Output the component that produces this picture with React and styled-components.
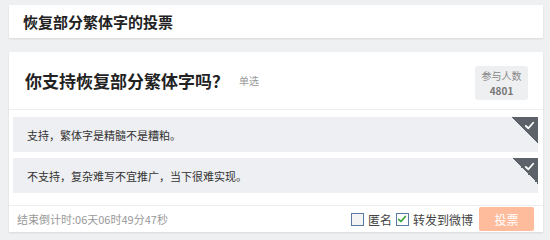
import React from "react";
import styled, { createGlobalStyle } from "styled-components";

const GlobalStyle = createGlobalStyle`
  body {
    margin: 0;
    background: #eef0f2;
    font-family: "Noto Sans CJK SC", "Liberation Sans", sans-serif;
  }
`;

const options = [
  { id: 1, text: "支持，繁体字是精髓不是糟粕。" },
  { id: 2, text: "不支持，复杂难写不宜推广，当下很难实现。" },
];

const Check = ({ color = "#fff", size = 12 }) => (
  <svg width={size} height={size} viewBox="0 0 12 12">
    <path d="M2 6.5 L4.8 9 L10 3" fill="none" stroke={color} strokeWidth="2" strokeLinecap="round" strokeLinejoin="round" />
  </svg>
);

const App = () => {
  return (
    <>
      <GlobalStyle />
      <Page>
        <TitleCard>恢复部分繁体字的投票</TitleCard>
        <VoteCard>
          <Head>
            <Question>
              你支持恢复部分繁体字吗？<Kind>单选</Kind>
            </Question>
            <Count>
              <CountLine>参与人数</CountLine>
              <CountLine bold>4801</CountLine>
            </Count>
          </Head>
          <List>
            {options.map((o) => (
              <Option key={o.id}>
                {o.text}
                <Corner>
                  <Check size={11} />
                </Corner>
              </Option>
            ))}
          </List>
          <Footer>
            <Timer>结束倒计时:06天06时49分47秒</Timer>
            <Actions>
              <Box />
              <Label>匿名</Label>
              <Box checked>
                <Check color="#3aa33a" size={10} />
              </Box>
              <Label>转发到微博</Label>
              <VoteButton>投票</VoteButton>
            </Actions>
          </Footer>
        </VoteCard>
      </Page>
    </>
  );
};

export default App;

const Page = styled.div`
  width: 550px;
  height: 240px;
  padding: 5px 7px 0 9px;
  box-sizing: border-box;
  display: flex;
  flex-direction: column;
  gap: 14px;
`;

const Card = styled.div`
  background: #fff;
  box-shadow: 0 1px 2px rgba(0, 0, 0, 0.1);
`;

const TitleCard = styled(Card)`
  height: 33px;
  display: flex;
  align-items: center;
  padding-left: 14px;
  font-size: 15px;
  font-weight: bold;
  color: #222;
`;

const VoteCard = styled(Card)`
  display: flex;
  flex-direction: column;
  height: 180px;
`;

const Head = styled.div`
  height: 58px;
  border-bottom: 1px solid #eceef0;
  display: flex;
  align-items: flex-start;
  justify-content: space-between;
  padding: 0 15px 0 16px;
  box-sizing: border-box;
`;

const Question = styled.div`
  margin-top: 16px;
  font-size: 17px;
  font-weight: bold;
  color: #222;
  display: flex;
  align-items: center;
`;

const Kind = styled.span`
  font-size: 10px;
  font-weight: normal;
  color: #999;
  margin-left: 10px;
`;

const Count = styled.div`
  margin-top: 14px;
  width: 53px;
  height: 34px;
  background: #eeeff1;
  border-radius: 3px;
  display: flex;
  flex-direction: column;
  align-items: center;
  justify-content: center;
`;

const CountLine = styled.span`
  display: block;
  font-size: 10px;
  line-height: 15px;
  color: ${(p) => (p.bold ? "#777" : "#888")};
  font-weight: ${(p) => (p.bold ? "bold" : "normal")};
`;

const List = styled.div`
  display: flex;
  flex-direction: column;
  gap: 6px;
  padding: 7px 5px 0 4px;
  height: 88px;
  border-bottom: 1px solid #eceef0;
`;

const Option = styled.div`
  position: relative;
  height: 35px;
  background: #eeeff2;
  display: flex;
  align-items: center;
  padding-left: 14px;
  font-size: 11px;
  color: #333;
  overflow: hidden;
`;

const Corner = styled.div`
  position: absolute;
  top: 0;
  right: 0;
  width: 26px;
  height: 26px;
  background: linear-gradient(to bottom left, #5d6169 50%, transparent 50%);
  display: flex;
  justify-content: flex-end;
  padding: 3px 3px 0 0;
  box-sizing: border-box;
`;

const Footer = styled.div`
  flex: 1;
  display: flex;
  align-items: center;
  justify-content: space-between;
  padding: 0 9px 0 8px;
`;

const Timer = styled.span`
  font-size: 11px;
  color: #999;
`;

const Actions = styled.div`
  display: flex;
  align-items: center;
`;

const Box = styled.span`
  width: 11px;
  height: 11px;
  border: 1px solid #5b7aa3;
  background: ${(p) => (p.checked ? "#fff" : "#f4f4f4")};
  display: flex;
  align-items: center;
  justify-content: center;
  margin-right: 4px;
`;

const Label = styled.span`
  font-size: 12px;
  color: #444;
  margin-right: 4px;
`;

const VoteButton = styled.button`
  width: 55px;
  height: 24px;
  border: none;
  border-radius: 2px;
  background: #ffbc9c;
  color: #fff;
  font-family: inherit;
  font-size: 12px;
  margin-left: 2px;
`;
